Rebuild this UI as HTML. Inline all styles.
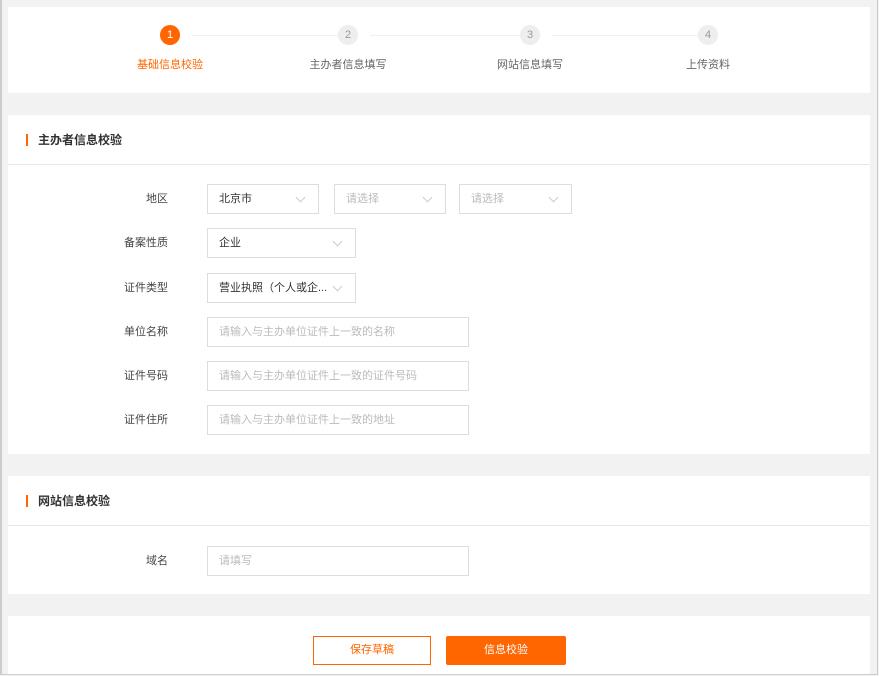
<!DOCTYPE html>
<html><head><meta charset="utf-8"><style>
*{box-sizing:border-box;margin:0;padding:0}
body{width:879px;height:676px;background:#f2f2f3;font-family:"Liberation Sans","Noto Sans CJK SC",sans-serif;font-size:12px;color:#333;position:relative;overflow:hidden}
.frame{position:absolute;left:0;top:0;width:878px;height:675px;border-left:2px solid #ccc;border-right:1px solid #ccc;border-bottom:1px solid #ccc}
.p{position:absolute;left:8px;width:862px;background:#fff}
.c{position:absolute;width:20px;height:20px;border-radius:50%;background:#eee;color:#999;font-size:11px;text-align:center;line-height:20px;top:18px}
.c.on{background:#f60;color:#fff}
.sl{position:absolute;top:49px;font-size:11px;color:#666;width:120px;text-align:center}
.ln{position:absolute;top:28px;height:1px;background:#f0f0f0}
.h{position:absolute;left:0;width:862px;height:50px;border-bottom:1px solid #e8e8e8;font-weight:bold;font-size:12px;line-height:50px;padding-left:30px}
.h:before{content:"";position:absolute;left:18px;top:19px;width:2px;height:12px;background:#f60}
.lb{position:absolute;width:70px;text-align:right;font-size:11px;color:#444;line-height:30px}
.in{position:absolute;height:30px;border:1px solid #ddd;font-size:11px;line-height:28px;padding-left:11px;color:#333}
.ph{color:#bbb}
.in.s:after{content:"";position:absolute;right:14px;top:9px;width:6px;height:6px;border-right:1px solid #ccc;border-bottom:1px solid #ccc;transform:rotate(45deg)}
.b{position:absolute;top:20px;height:29px;width:118px;text-align:center;line-height:29px;font-size:11px}
</style></head><body>
<div class="p" style="top:7px;height:86px">
<div class="ln" style="left:184px;width:146px"></div>
<div class="ln" style="left:362px;width:150px"></div>
<div class="ln" style="left:544px;width:146px"></div>
<div class="c on" style="left:152px">1</div>
<div class="c" style="left:330px">2</div>
<div class="c" style="left:512px">3</div>
<div class="c" style="left:690px">4</div>
<div class="sl" style="left:102px;color:#f60">基础信息校验</div>
<div class="sl" style="left:280px">主办者信息填写</div>
<div class="sl" style="left:462px">网站信息填写</div>
<div class="sl" style="left:640px">上传资料</div>
</div>
<div class="p" style="top:115px;height:339px">
<div class="h">主办者信息校验</div>
<div class="lb" style="left:90px;top:69px">地区</div>
<div class="in s" style="left:199px;top:69px;width:112px">北京市</div>
<div class="in s ph" style="left:326px;top:69px;width:112px">请选择</div>
<div class="in s ph" style="left:451px;top:69px;width:113px">请选择</div>
<div class="lb" style="left:90px;top:113px">备案性质</div>
<div class="in s" style="left:199px;top:113px;width:149px">企业</div>
<div class="lb" style="left:90px;top:158px">证件类型</div>
<div class="in s" style="left:199px;top:158px;width:149px">营业执照（个人或企...</div>
<div class="lb" style="left:90px;top:202px">单位名称</div>
<div class="in ph" style="left:199px;top:202px;width:262px">请输入与主办单位证件上一致的名称</div>
<div class="lb" style="left:90px;top:246px">证件号码</div>
<div class="in ph" style="left:199px;top:246px;width:262px">请输入与主办单位证件上一致的证件号码</div>
<div class="lb" style="left:90px;top:290px">证件住所</div>
<div class="in ph" style="left:199px;top:290px;width:262px">请输入与主办单位证件上一致的地址</div>
</div>
<div class="p" style="top:476px;height:118px">
<div class="h">网站信息校验</div>
<div class="lb" style="left:90px;top:70px">域名</div>
<div class="in ph" style="left:199px;top:70px;width:262px">请填写</div>
</div>
<div class="p" style="top:616px;height:58px">
<div class="b" style="left:305px;border:1px solid #f60;color:#f60;background:#fff;line-height:27px">保存草稿</div>
<div class="b" style="left:438px;width:120px;background:#f60;color:#fff;border-radius:2px">信息校验</div>
</div>
<div class="frame"></div>
</body></html>
